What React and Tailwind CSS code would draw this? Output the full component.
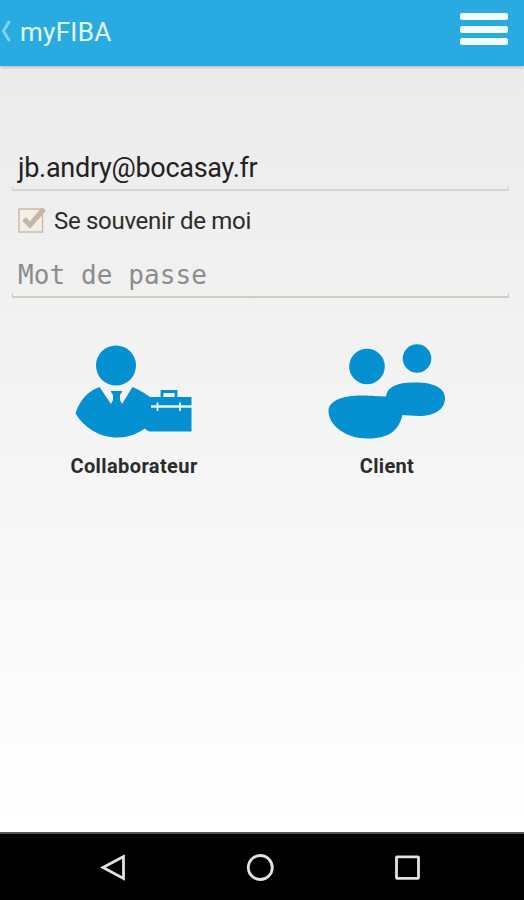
import React, { useState } from 'react';

const CollaborateurIcon = () => (
    <svg width="120" height="100" viewBox="0 0 120 100" fill="#0590d2">
        <circle cx="42" cy="25.500" r="20" />
        <path d="M25.500 47 C14 51 5 61 1.500 73.500 C10 87 24 97.500 44 97.500 C56 97.500 64 93 71 88.500 C73 91 75 91.500 78 91.500 H117.500 V57 H76 C70 53 66 50 58.500 47 L48 64 L46 60 V55 L48 52 V51 H37 V52 L39 55 V60 L37 64 Z" />
        <path d="M88 58 V51.500 H102 V58" fill="none" stroke="#0590d2" strokeWidth="2.800" />
        <path d="M77 66.500 H118" stroke="#e6f5fc" strokeWidth="2.400" />
        <path d="M83.500 62.500 V71 M106 62.500 V71" stroke="#e6f5fc" strokeWidth="1.800" />
    </svg>
);

const ClientIcon = () => (
    <svg width="120" height="100" viewBox="0 0 120 100" fill="#0590d2">
        <circle cx="40" cy="26.500" r="17.800" />
        <circle cx="90" cy="18.500" r="14.300" />
        <path d="M59 56.500 C60 47 70 42.500 86 42.500 C107 42 118 48 118 58.500 C118 69 108 76 92 76 C85 76 79 75 75.500 75 C72 89 64 98.500 41 98.500 C18 98.500 1.500 85 1.500 71 C1.500 61 15 55.500 35 55.500 C45 55.500 51 56.500 59 56.500 Z" />
    </svg>
);

const Underline = ({ className }) => (
    <div className={`mx-3 mr-[15px] h-[5px] border-x border-b-2 ${className}`} />
);

const Header = () => (
    <header className="relative flex h-[66px] items-start justify-between bg-[#29abe2] shadow-[0_1px_3px_rgba(0,0,0,0.25)]">
        <div className="flex h-16 items-center">
            <svg width="12" height="24" viewBox="0 0 12 24" fill="none" stroke="#7fd2f3" strokeWidth="3">
                <path d="M9.500 1 L3.500 11 L9.500 21" />
            </svg>
            <h1 className="ml-2 text-[26px] leading-none tracking-[0.3px] text-[#e2f8ff]">myFIBA</h1>
        </div>
        <button className="mt-[13px] mr-4 flex w-12 flex-col gap-[5.5px]">
            <span className="h-[7px] w-full rounded-xs bg-[#f0fcff]" />
            <span className="h-[7px] w-full rounded-xs bg-[#f0fcff]" />
            <span className="h-[7px] w-full rounded-xs bg-[#f0fcff]" />
        </button>
    </header>
);

const NavBar = () => (
    <nav className="h-[68px] border-t-2 border-[#555] bg-black">
        <svg width="524" height="66" viewBox="0 834 524 66" fill="none" stroke="#e2e2e2" strokeWidth="2.8">
            <path d="M123.500 856.500 V878.500 L103 867.500 Z" />
            <circle cx="260.300" cy="867.500" r="12" />
            <rect x="396.500" y="856.800" width="22" height="21.500" rx="0.500" />
        </svg>
    </nav>
);

const App = () => {
    const [remember, setRemember] = useState(true);

    return (
        <div className="flex h-[900px] w-[524px] flex-col overflow-hidden font-['Roboto',sans-serif]">
            <Header />
            <main className="flex-1 bg-linear-to-b from-[#ebebeb] via-[#f5f5f5] to-white">
                <div className="mt-[84px] pl-[18px] text-[27px] leading-9 tracking-[-0.28px] text-[#222]">
                    jb.andry@bocasay.fr
                </div>
                <Underline className="border-[#d4d4d4]" />
                <button
                    onClick={() => setRemember(!remember)}
                    className="mt-[11px] flex h-9 items-center pl-[18px]"
                >
                    <svg width="30" height="30" viewBox="0 0 30 30" fill="none">
                        <rect x="1" y="4" width="23.500" height="23" fill="#f5eee5" stroke="#c9bab0" strokeWidth="1.500" />
                        {remember && <path d="M6 14 L12 20 L26 4" stroke="#c4b5a4" strokeWidth="5" />}
                    </svg>
                    <span className="ml-1.5 pt-0.5 text-[24px] leading-none tracking-[-0.3px] text-[#2b2b2b]">
                        Se souvenir de moi
                    </span>
                </button>
                <div className="mt-[19px] pl-[18px] font-['DejaVu_Sans_Mono',monospace] text-[26px] leading-9 tracking-[0.1px] text-[#8c8c8c]">
                    Mot de passe
                </div>
                <Underline className="border-[#d2cdbf]" />
                <div className="mt-[42px] flex">
                    <button className="ml-[74px] flex w-[120px] flex-col items-center">
                        <CollaborateurIcon />
                        <span className="mt-3.5 text-[20px] leading-6 font-bold tracking-[0.4px] text-[#2b2b2b]">
                            Collaborateur
                        </span>
                    </button>
                    <button className="ml-[133px] flex w-[120px] flex-col items-center">
                        <ClientIcon />
                        <span className="mt-3.5 text-[20px] leading-6 font-bold tracking-[0.3px] text-[#2b2b2b]">
                            Client
                        </span>
                    </button>
                </div>
            </main>
            <NavBar />
        </div>
    );
};

export default App;
